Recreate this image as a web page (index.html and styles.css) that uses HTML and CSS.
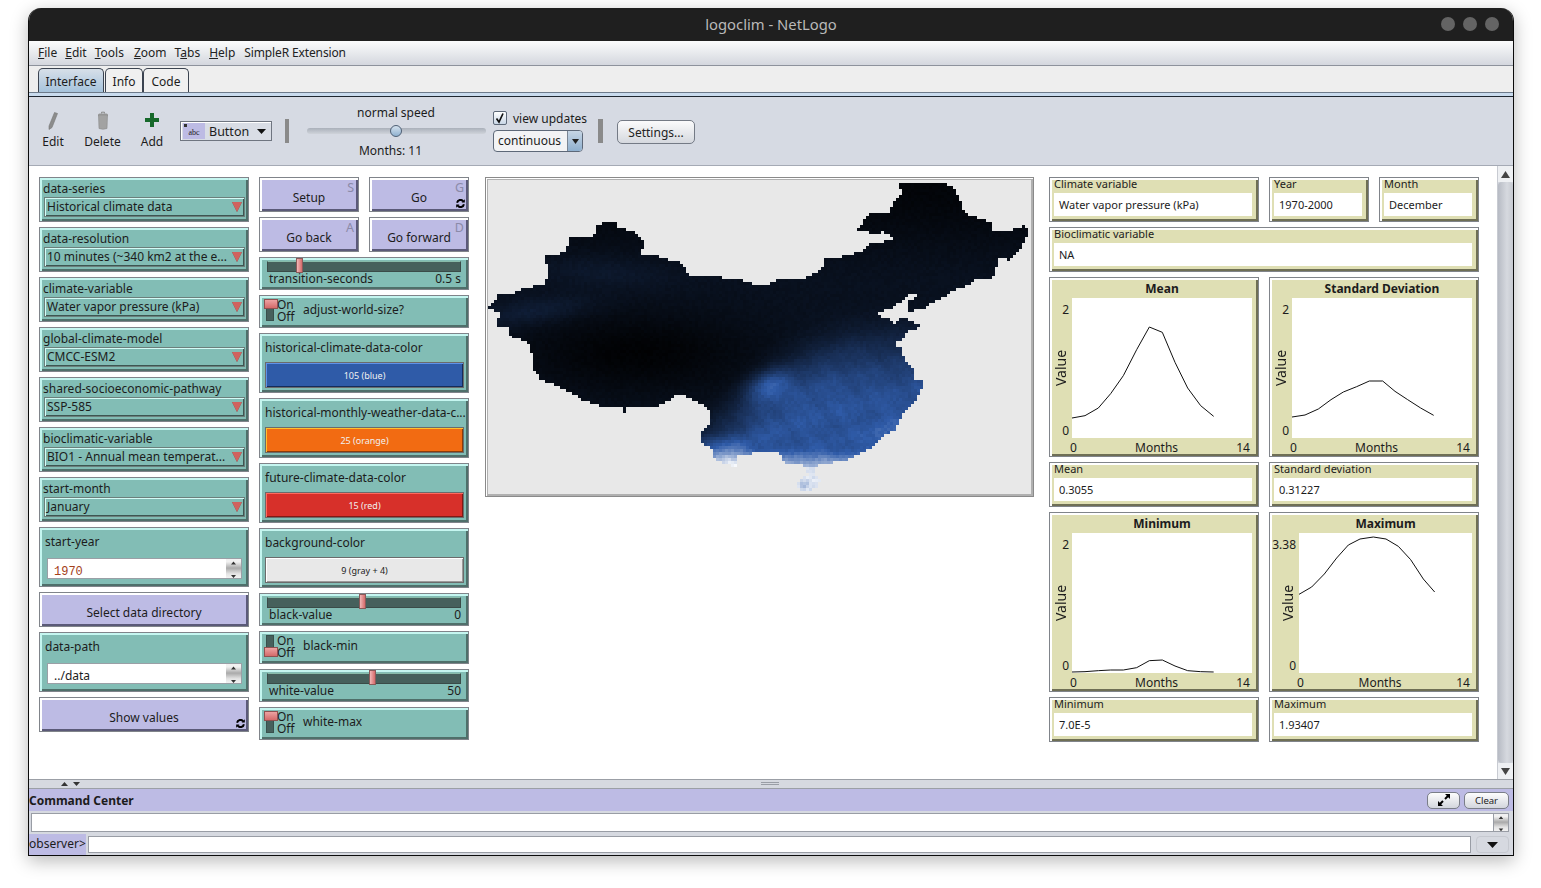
FILE: index.html
```html
<!DOCTYPE html>
<html lang="en">
<head>
<meta charset="utf-8">
<title>logoclim - NetLogo</title>
<link rel="stylesheet" href="styles.css">
</head>
<body>
<svg class="defs" width="0" height="0" aria-hidden="true">
  <defs>
    <symbol id="forever" viewBox="0 0 10 10">
      <path d="M1.2 4.2A3.8 3.8 0 0 1 8 2.6M8.8 5.8A3.8 3.8 0 0 1 2 7.4" fill="none" stroke="#000" stroke-width="2.2"/>
      <path d="M6.2 3.8H9.8V.2ZM3.8 6.2H.2V9.8Z" fill="#000"/>
    </symbol>
    <symbol id="spin" viewBox="0 0 15 21">
      <path d="M5 5.5 7.5 2.5 10 5.5ZM5 16 7.5 19 10 16Z" fill="#333"/>
    </symbol>
  </defs>
</svg>
<div class="window">
  <header class="titlebar">
    <span class="title">logoclim - NetLogo</span>
    <span class="dots"><i></i><i></i><i></i></span>
  </header>
  <nav class="menubar">
    <span><u>F</u>ile</span><span><u>E</u>dit</span><span><u>T</u>ools</span><span class="m-zoom"><u>Z</u>oom</span><span>T<u>a</u>bs</span><span class="m-help"><u>H</u>elp</span><span class="m-ext">SimpleR Extension</span>
  </nav>
  <div class="tabs">
    <span class="tab active">Interface</span><span class="tab tab-info">Info</span><span class="tab tab-code">Code</span>
  </div>
  <div class="tabstrip"></div>
  <div class="toolbar">
    <div class="tool tool-edit">
      <svg width="12" height="20" viewBox="0 0 12 20"><path d="M7.5 1.5 10.5 2.5 5 16.5 2 18.5 2 15Z" fill="#8c8c8c" stroke="#777" stroke-width=".6"/></svg>
      <span>Edit</span>
    </div>
    <div class="tool tool-delete">
      <svg width="12" height="20" viewBox="0 0 12 20"><path d="M4.5 2.5V1.2H7.5V2.5" fill="none" stroke="#888"/><rect x="1" y="2.5" width="10" height="3" rx="1.5" fill="#9a9a9a"/><path d="M1.5 4H10.5L10 17.5Q6 19 2 17.5Z" fill="#a2a2a2" stroke="#8a8a8a" stroke-width=".6"/></svg>
      <span>Delete</span>
    </div>
    <div class="tool tool-add">
      <svg width="14" height="20" viewBox="0 0 14 20"><path d="M5 2H9V7H14V11H9V16H5V11H0V7H5Z" fill="#17692b"/></svg>
      <span>Add</span>
    </div>
    <div class="widget-picker">
      <span class="picker-icon"><i>abc</i></span>
      <span class="picker-name">Button</span>
      <svg width="9" height="5" viewBox="0 0 9 5"><path d="M0 0H9L4.5 5Z" fill="#111"/></svg>
    </div>
    <div class="sep"></div>
    <div class="speed">
      <span class="speed-top">normal speed</span>
      <div class="speed-track"><span class="speed-thumb"></span></div>
      <span class="speed-bottom">Months: 11</span>
    </div>
    <div class="updates">
      <label class="check-row"><span class="check"><svg width="12" height="12" viewBox="0 0 12 12"><path d="M2.5 6.5 5 10 9 1.5" fill="none" stroke="#111" stroke-width="1.7"/></svg></span>view updates</label>
      <div class="combo"><span class="combo-text">continuous</span><span class="combo-btn"><svg width="7" height="5" viewBox="0 0 7 5"><path d="M0 0H7L3.5 5Z" fill="#222"/></svg></span></div>
    </div>
    <div class="sep sep-2"></div>
    <button class="settings">Settings...</button>
  </div>

  <main class="workspace">
    <div class="canvas">
      <section class="col">
        <div class="w teal chooser"><span class="w-label">data-series</span><div class="chooser-box"><span>Historical climate data</span><b class="tri"></b></div></div>
        <div class="w teal chooser"><span class="w-label">data-resolution</span><div class="chooser-box"><span>10 minutes (~340 km2 at the e...</span><b class="tri"></b></div></div>
        <div class="w teal chooser"><span class="w-label">climate-variable</span><div class="chooser-box"><span>Water vapor pressure (kPa)</span><b class="tri"></b></div></div>
        <div class="w teal chooser"><span class="w-label">global-climate-model</span><div class="chooser-box"><span>CMCC-ESM2</span><b class="tri"></b></div></div>
        <div class="w teal chooser"><span class="w-label">shared-socioeconomic-pathway</span><div class="chooser-box"><span>SSP-585</span><b class="tri"></b></div></div>
        <div class="w teal chooser"><span class="w-label">bioclimatic-variable</span><div class="chooser-box"><span>BIO1 - Annual mean temperat...</span><b class="tri"></b></div></div>
        <div class="w teal chooser"><span class="w-label">start-month</span><div class="chooser-box"><span>January</span><b class="tri"></b></div></div>
        <div class="w teal input"><span class="input-label">start-year</span><div class="input-field"><span class="num">1970</span><span class="spinner"><svg width="15" height="21"><use href="#spin"/></svg></span></div></div>
        <div class="w lav button">Select data directory</div>
        <div class="w teal input"><span class="input-label">data-path</span><div class="input-field"><span class="str">../data</span><span class="spinner"><svg width="15" height="21"><use href="#spin"/></svg></span></div></div>
        <div class="w lav button">Show values<svg class="forever" width="9" height="9"><use href="#forever"/></svg></div>
      </section>

      <section class="col">
        <div class="btn-row">
          <div class="w lav button half">Setup<span class="key">S</span></div>
          <div class="w lav button half">Go<span class="key">G</span><svg class="forever" width="9" height="9"><use href="#forever"/></svg></div>
        </div>
        <div class="btn-row">
          <div class="w lav button half">Go back<span class="key">A</span></div>
          <div class="w lav button half">Go forward<span class="key">D</span></div>
        </div>
        <div class="w teal slider"><div class="track"><span class="thumb" style="left:16.5%"></span></div><div class="slider-text"><span>transition-seconds</span><span>0.5 s</span></div></div>
        <div class="w teal switch"><span class="toggle on"></span><span class="onoff"><span>On</span><span>Off</span></span><span class="switch-name">adjust-world-size?</span></div>
        <div class="w teal colorw"><span class="input-label">historical-climate-data-color</span><div class="swatch blue">105 (blue)</div></div>
        <div class="w teal colorw"><span class="input-label">historical-monthly-weather-data-c...</span><div class="swatch orange">25 (orange)</div></div>
        <div class="w teal colorw"><span class="input-label">future-climate-data-color</span><div class="swatch red">15 (red)</div></div>
        <div class="w teal colorw"><span class="input-label">background-color</span><div class="swatch grey">9 (gray + 4)</div></div>
        <div class="w teal slider"><div class="track"><span class="thumb" style="left:49.5%"></span></div><div class="slider-text"><span>black-value</span><span>0</span></div></div>
        <div class="w teal switch"><span class="toggle off"></span><span class="onoff"><span>On</span><span>Off</span></span><span class="switch-name">black-min</span></div>
        <div class="w teal slider"><div class="track"><span class="thumb" style="left:54.6%"></span></div><div class="slider-text"><span>white-value</span><span>50</span></div></div>
        <div class="w teal switch"><span class="toggle on"></span><span class="onoff"><span>On</span><span>Off</span></span><span class="switch-name">white-max</span></div>
      </section>

      <section class="view">
        <canvas id="map" class="map" width="181" height="105"></canvas>
      </section>

      <section class="col col-right">
        <div class="right-row">
          <div class="w tan monitor"><span class="m-label">Climate variable</span><div class="m-value">Water vapor pressure (kPa)</div></div>
          <div class="w tan monitor small"><span class="m-label">Year</span><div class="m-value">1970-2000</div></div>
          <div class="w tan monitor small"><span class="m-label">Month</span><div class="m-value">December</div></div>
        </div>
        <div class="w tan monitor wide"><span class="m-label">Bioclimatic variable</span><div class="m-value">NA</div></div>
        <div class="right-row">
          <div class="w tan plot">
            <div class="plot-title">Mean</div>
            <div class="plot-mid">
              <span class="y-name">Value</span>
              <span class="y-ticks"><span>2</span><span>0</span></span>
              <svg class="plot-area" viewBox="0 0 540 420" preserveAspectRatio="none"><polyline points="0,360 39,353 79,330 116,287 154,233 194,155 232,87 271,103 309,193 347,270 386,323 425,355"/></svg>
            </div>
            <div class="plot-foot"><span>0</span><span class="foot-name">Months</span><span>14</span></div>
          </div>
          <div class="w tan plot">
            <div class="plot-title">Standard Deviation</div>
            <div class="plot-mid">
              <span class="y-name">Value</span>
              <span class="y-ticks"><span>2</span><span>0</span></span>
              <svg class="plot-area" viewBox="0 0 540 420" preserveAspectRatio="none"><polyline points="0,357 39,351 79,333 117,305 154,282 194,266 232,249 272,249 309,280 347,305 386,330 425,352"/></svg>
            </div>
            <div class="plot-foot"><span>0</span><span class="foot-name">Months</span><span>14</span></div>
          </div>
        </div>
        <div class="right-row">
          <div class="w tan monitor half-r"><span class="m-label">Mean</span><div class="m-value">0.3055</div></div>
          <div class="w tan monitor half-r"><span class="m-label">Standard deviation</span><div class="m-value">0.31227</div></div>
        </div>
        <div class="right-row">
          <div class="w tan plot">
            <div class="plot-title">Minimum</div>
            <div class="plot-mid">
              <span class="y-name">Value</span>
              <span class="y-ticks"><span>2</span><span>0</span></span>
              <svg class="plot-area" viewBox="0 0 540 420" preserveAspectRatio="none"><polyline points="0,417 39,416 79,413 116,411 154,411 194,404 232,383 271,381 309,399 347,413 386,416 425,417"/></svg>
            </div>
            <div class="plot-foot"><span>0</span><span class="foot-name">Months</span><span>14</span></div>
          </div>
          <div class="w tan plot plot-wide-y">
            <div class="plot-title">Maximum</div>
            <div class="plot-mid">
              <span class="y-name">Value</span>
              <span class="y-ticks"><span>3.38</span><span>0</span></span>
              <svg class="plot-area" viewBox="0 0 519 420" preserveAspectRatio="none"><polyline points="0,184 38,162 76,123 113,75 148,36 183,18 223,12 261,18 298,40 335,80 373,138 407,177"/></svg>
            </div>
            <div class="plot-foot"><span>0</span><span class="foot-name">Months</span><span>14</span></div>
          </div>
        </div>
        <div class="right-row">
          <div class="w tan monitor half-r"><span class="m-label">Minimum</span><div class="m-value">7.0E-5</div></div>
          <div class="w tan monitor half-r"><span class="m-label">Maximum</span><div class="m-value">1.93407</div></div>
        </div>
      </section>
    </div>
    <aside class="scrollbar">
      <span class="sb-btn"><svg width="9" height="7" viewBox="0 0 9 7"><path d="M0 7H9L4.5 0Z" fill="#444"/></svg></span>
      <span class="sb-thumb"></span>
      <span class="sb-btn"><svg width="9" height="7" viewBox="0 0 9 7"><path d="M0 0H9L4.5 7Z" fill="#444"/></svg></span>
    </aside>
  </main>

  <div class="splitter">
    <span class="split-arrows">
      <svg width="7" height="4" viewBox="0 0 7 4"><path d="M0 4H7L3.5 0Z" fill="#333"/></svg>
      <svg width="7" height="4" viewBox="0 0 7 4"><path d="M0 0H7L3.5 4Z" fill="#333"/></svg>
    </span>
    <span class="grip"></span>
  </div>
  <section class="command">
    <div class="cmd-title">
      <span>Command Center</span>
      <span class="cmd-buttons">
        <button class="cmd-btn expand"><svg width="12" height="12" viewBox="0 0 12 12"><path d="M7 0H12V5L10.2 3.2 7.7 5.7 6.3 4.3 8.8 1.8ZM5 12H0V7L1.8 8.8 4.3 6.3 5.7 7.7 3.2 10.2Z" fill="#000"/></svg></button>
        <button class="cmd-btn clear">Clear</button>
      </span>
    </div>
    <div class="cmd-output"><div class="cmd-area"></div><span class="spinner"><svg width="15" height="19" viewBox="0 0 15 21"><use href="#spin"/></svg></span></div>
    <div class="cmd-input">
      <span class="prompt">observer&gt;</span>
      <div class="cmd-field"></div>
      <span class="cmd-drop"><svg width="11" height="6" viewBox="0 0 11 6"><path d="M0 0H11L5.5 6Z" fill="#111"/></svg></span>
    </div>
  </section>
</div>
<script src="map.js"></script>
</body>
</html>
```

FILE: map.js
```js
(function () {
  var outline = [1175,35,1210,30,1300,35,1330,50,1345,85,1360,125,1435,150,1440,178,1490,175,1530,160,1540,180,1525,215,1500,250,1480,265,1465,255,1450,265,1445,310,1420,325,1400,315,1370,340,1345,350,1340,345,1300,375,1260,395,1245,410,1200,418,1195,395,1220,370,1200,365,1160,405,1115,420,1115,430,1150,445,1155,460,1190,430,1200,450,1240,455,1225,470,1195,480,1190,495,1160,520,1180,535,1190,570,1215,600,1218,630,1240,628,1235,660,1220,690,1190,720,1175,745,1165,775,1130,795,1100,825,1060,850,1020,870,940,880,935,910,950,925,940,950,910,965,885,950,890,925,915,910,910,885,850,875,835,845,800,840,740,850,715,855,718,888,675,880,650,860,650,835,615,815,612,790,635,760,640,720,620,705,575,680,560,670,540,675,495,705,465,712,410,705,395,725,390,708,340,710,285,690,260,675,215,650,160,625,135,590,140,570,125,515,75,495,70,465,35,462,45,425,12,405,40,370,85,370,95,355,170,335,185,295,170,255,230,240,245,195,310,195,315,160,370,145,380,165,435,185,450,210,445,245,500,255,560,275,580,310,720,320,740,332,790,340,830,325,920,315,960,285,955,255,1000,258,1070,235,1085,215,1160,205,1130,180,1100,185,1055,175,1085,125,1145,120,1170,70,1185,65,1170,40];

  function inside(x, y) {
    var hit = false;
    for (var i = 0, j = outline.length - 2; i < outline.length; j = i, i += 2) {
      var xi = outline[i], yi = outline[i + 1], xj = outline[j], yj = outline[j + 1];
      if ((yi > y) !== (yj > y) && x < (xj - xi) * (y - yi) / (yj - yi) + xi) hit = !hit;
    }
    return hit;
  }
  function smooth(a, b, v) {
    var t = Math.min(1, Math.max(0, (v - a) / (b - a)));
    return t * t * (3 - 2 * t);
  }
  function blob(x, y, cx, cy, sx, sy, deg) {
    var r = deg * Math.PI / 180, dx = x - cx, dy = y - cy;
    var u = (dx * Math.cos(r) + dy * Math.sin(r)) / sx;
    var w = (-dx * Math.sin(r) + dy * Math.cos(r)) / sy;
    return Math.exp(-(u * u + w * w));
  }
  function random(x, y) {
    var s = Math.sin(x * 12.9898 + y * 78.233) * 43758.5453;
    return s - Math.floor(s);
  }
  /* value of the raster at a point: 0 is black, .5 the blue, 1 white */
  function value(x, y) {
    var v = 0.025 + 0.065 * smooth(30, 350, y);
    v += 0.09 * blob(x, y, 150, 420, 150, 38, -8);
    v += 0.045 * blob(x, y, 340, 300, 190, 45, 4);
    v *= 1 - 0.86 * blob(x, y, 430, 545, 340, 125, 0);
    var east = smooth(700, 1000, x + (y - 600) * 0.9);
    var blotch = Math.sin(x * 0.037 + y * 0.023 + 1) * Math.sin(x * 0.013 - y * 0.047) + 0.5 * Math.sin(x * 0.09 - y * 0.07);
    v += east * smooth(380, 720, y) * (0.36 + 0.025 * blotch);
    v += 0.29 * blob(x, y, 805, 645, 62, 40, -25);
    v += 0.34 * smooth(825, 895, y);
    v += 0.24 * smooth(770, 850, y) * (1 - smooth(680, 800, x));
    v += 0.08 * blob(x, y, 1130, 790, 60, 35, -30);
    if (y > 892) v = 0.92 - 0.14 * blob(x, y, 905, 942, 14, 12, 0);
    v += (random(x, y) - 0.5) * (0.012 + 0.07 * v);
    return Math.max(0, Math.min(1, v));
  }
  function ramp(v) {
    var blue = [47, 91, 168];
    return blue.map(function (c) {
      return v < 0.5 ? c * v / 0.5 : c + (255 - c) * (v - 0.5) / 0.5;
    });
  }

  var canvas = document.getElementById("map");
  var ctx = canvas.getContext("2d");
  var img = ctx.createImageData(canvas.width, canvas.height);
  for (var row = 0; row < canvas.height; row++) {
    for (var col = 0; col < canvas.width; col++) {
      var x = 11 + (col + 0.5) * 3 * 2.825, y = 24 + (row + 0.5) * 3 * 3;
      var c = inside(x, y) ? ramp(value(x, y)) : [232, 232, 232];
      var p = (row * canvas.width + col) * 4;
      img.data[p] = c[0]; img.data[p + 1] = c[1]; img.data[p + 2] = c[2]; img.data[p + 3] = 255;
    }
  }
  ctx.putImageData(img, 0, 0);
})();
```

FILE: styles.css
```css
* { box-sizing: border-box; }
html, body { height: 100%; overflow: hidden; }
body {
  margin: 0;
  padding: 8px 0 0 28px;
  background: #fff;
  font-family: "Noto Sans", sans-serif;
  font-size: 12px;
  color: #1c1c1c;
}
.defs { position: absolute; }
i { font-style: normal; }

.window {
  width: 1486px;
  height: 848px;
  display: flex;
  flex-direction: column;
  border: 1px solid #0b0b0b;
  border-top: 0;
  border-radius: 13px 13px 0 0;
  background: #fff;
  box-shadow: 0 5px 18px rgba(0, 0, 0, .28);
  overflow: hidden;
}

/* title bar */
.titlebar {
  height: 33px;
  flex: none;
  display: flex;
  align-items: center;
  justify-content: center;
  position: relative;
  padding-bottom: 2px;
  background: #1f1f1f;
}
.title { font-size: 14.8px; color: #b9b9b9; }
.dots {
  position: absolute;
  right: 14px;
  top: 9px;
  display: flex;
  gap: 8px;
}
.dots i { width: 14px; height: 14px; border-radius: 50%; background: #646464; }

/* menu */
.menubar {
  height: 25px;
  flex: none;
  display: flex;
  align-items: center;
  gap: 8px;
  padding: 0 0 1px 9px;
  font-size: 12px;
  color: #222;
  background: linear-gradient(#fbfcfc, #d4d7de);
  border-bottom: 1px solid #8d929c;
}
.m-zoom { margin-left: 2px; }
.m-help { margin-left: 1px; }
.m-ext { margin-left: 1px; letter-spacing: -.13px; }

/* tabs */
.tabs {
  height: 27px;
  flex: none;
  display: flex;
  align-items: flex-end;
  padding-left: 9px;
  background: #eeeeee;
  border-bottom: 1px solid #6d7a8a;
}
.tab {
  height: 24px;
  width: 66px;
  padding-top: 2px;
  display: flex;
  align-items: center;
  justify-content: center;
  font-size: 12px;
  border: 1px solid #3b4350;
  border-bottom: 0;
  border-radius: 5px 5px 0 0;
  background: #f0f0f0;
}
.tab.active { margin-right: 1px; background: linear-gradient(#d7dfe8, #a6c3dc); }
.tab-info { width: 38px; }
.tab-code { width: 46px; margin-left: 0; }
.tabstrip {
  height: 4px;
  flex: none;
  background: #c9dbee;
  border-bottom: 1px solid #1e2630;
}

/* toolbar */
.toolbar {
  height: 69px;
  flex: none;
  position: relative;
  display: flex;
  align-items: flex-start;
  background: #d6dae3;
  border-bottom: 1px solid #a5aab5;
}
.tool {
  display: flex;
  flex-direction: column;
  align-items: center;
  margin-top: 14px;
  line-height: 16px;
  gap: 3px;
}
.tool-edit { width: 22px; margin-left: 13px; }
.tool-delete { width: 37px; margin-left: 20px; }
.tool-add { width: 22px; margin-left: 20px; }
.widget-picker {
  width: 92px;
  height: 20px;
  margin: 24px 0 0 17px;
  display: flex;
  align-items: center;
  border: 1px solid #6f7580;
  box-shadow: inset 1px 1px 0 #fff;
  background: #d9dde5;
  font-size: 12.5px;
}
.picker-icon {
  position: relative;
  width: 22px;
  height: 16px;
  margin-left: 2px;
  background: #bdbbe4;
  font-size: 8px;
  display: flex;
  align-items: flex-end;
  justify-content: center;
  line-height: 12px;
  font-family: "Liberation Serif", serif;
}
.picker-icon::before {
  content: "";
  position: absolute;
  left: 1px;
  top: 1px;
  width: 3px;
  height: 3px;
  background: #333;
}
.picker-name { margin-left: 4px; flex: 1; }
.widget-picker svg { margin-right: 5px; }
.sep {
  width: 4px;
  height: 24px;
  margin: 22px 0 0 13px;
  background: #8a8a8a;
}
.speed {
  width: 180px;
  margin-left: 17px;
  display: flex;
  flex-direction: column;
  align-items: center;
  padding-top: 8px;
}
.speed-top { line-height: 16px; margin-bottom: 7px; }
.speed-track {
  width: 179px;
  height: 6px;
  border-radius: 3px;
  background: linear-gradient(#aab0ba, #cfd3da);
  position: relative;
  margin-bottom: 9px;
}
.speed-thumb {
  position: absolute;
  left: 83px;
  top: -3px;
  width: 12px;
  height: 12px;
  border-radius: 50%;
  border: 1px solid #4e5f75;
  background: linear-gradient(#d5e2ee, #8fb1d0);
}
.speed-bottom { line-height: 16px; margin-right: 11px; }
.updates { margin-left: 7px; width: 94px; padding-top: 13px; }
.check-row { display: flex; align-items: center; gap: 6px; height: 16px; white-space: nowrap; }
.check {
  width: 14px;
  height: 14px;
  border: 1px solid #5d6878;
  border-radius: 2px;
  background: linear-gradient(#fff, #c9d6e6);
  display: flex;
  align-items: center;
  justify-content: center;
}
.combo {
  width: 90px;
  height: 22px;
  margin-top: 4px;
  display: flex;
  border: 1px solid #5d6878;
  border-radius: 4px;
  background: #f2f3f5;
  overflow: hidden;
}
.combo-text { flex: 1; padding-left: 4px; line-height: 19px; }
.combo-btn {
  width: 15px;
  display: flex;
  align-items: center;
  justify-content: center;
  border-left: 1px solid #7a8594;
  background: linear-gradient(#c6d5e4, #8fb0cf);
}
.sep-2 { width: 5px; margin-left: 11px; }
.settings {
  width: 78px;
  height: 24px;
  margin: 23px 0 0 14px;
  padding: 0;
  font: 12px "Noto Sans", sans-serif;
  color: #222;
  border: 1px solid #747a85;
  border-radius: 5px;
  background: linear-gradient(#fbfbfc, #d5d8de);
}

/* workspace */
.workspace {
  flex: 1;
  min-height: 0;
  display: flex;
  background: #fff;
}
.canvas {
  flex: 1;
  display: flex;
  align-items: flex-start;
  padding: 11px 0 0 10px;
}
.col {
  width: 210px;
  display: flex;
  flex-direction: column;
  gap: 5px;
  margin-right: 10px;
}
.w {
  position: relative;
  border: 1px solid #80848a;
  flex: none;
}
.teal { background: #82bdb5; box-shadow: inset 2px 2px 0 #c5f6f0, inset -2px -2px 0 #4f6f6a; }
.lav { background: #bdbbe4; box-shadow: inset 2px 2px 0 #fff, inset -2px -2px 0 #5b5a78; }
.tan { background: #dfdfb4; box-shadow: inset 2px 2px 0 #fff, inset -2px -2px 0 #6f6f55; }

/* chooser */
.chooser { height: 45px; padding: 3px 3px 0 3px; }
.w-label { display: block; line-height: 15px; margin-bottom: 1px; white-space: nowrap; }
.chooser-box {
  height: 20px;
  width: 201px;
  margin: 0 0 0 1px;
  padding: 0 0 1px 2px;
  display: flex;
  align-items: center;
  justify-content: space-between;
  border: 1px solid #6b7f7b;
  box-shadow: inset 1px 1px 0 #d4fbf6, inset -1px -1px 0 #3d5652;
  white-space: nowrap;
}
.tri {
  width: 0;
  height: 0;
  margin: 1px 2px 0 0;
  border-left: 5px solid transparent;
  border-right: 5px solid transparent;
  border-top: 10px solid #d0625e;
  filter: drop-shadow(0 0 .5px #555);
}

/* input */
.input { height: 60px; padding: 5px 0 0 5px; }
.input-label { display: block; line-height: 17px; white-space: nowrap; }
.input-field {
  width: 195px;
  height: 21px;
  margin: 8px 0 0 2px;
  padding-left: 6px;
  display: flex;
  align-items: stretch;
  justify-content: space-between;
  background: #fff;
  border: 1px solid #9a9fa6;
}
.num, .str { line-height: 23px; }
.num { padding-top: 2px; font-family: "Liberation Mono", monospace; color: #a3401a; font-size: 12px; }
.spinner {
  width: 15px;
  height: 100%;
  flex: none;
  display: flex;
  background: linear-gradient(#f1f1f1 15%, #aaa 48%, #e4e4e4 78%, #f2f2f2);
}

/* buttons */
.button {
  height: 35px;
  padding-top: 12px;
  text-align: center;
  line-height: 16px;
}
.btn-row { display: flex; gap: 10px; }
.half { width: 100px; }
.key {
  position: absolute;
  top: 2px;
  right: 4px;
  font-size: 12.5px;
  line-height: 15px;
  color: #8b8aa8;
}
.forever { position: absolute; right: 3px; bottom: 3px; }

/* slider */
.slider { height: 33px; padding: 3px 7px 0 7px; }
.track {
  height: 11px;
  position: relative;
  background: #46605c;
  border: 1px solid #3a4b48;
  border-top-color: #8ba;
}
.thumb {
  position: absolute;
  top: -4px;
  width: 7px;
  height: 15px;
  margin-left: -4px;
  background: linear-gradient(90deg, #f0b8b8, #d66a6a);
  border: 1px solid #8a5a5a;
}
.slider-text {
  display: flex;
  justify-content: space-between;
  margin-top: -1px;
  padding-left: 2px;
  line-height: 16px;
}

/* switch */
.switch { height: 33px; display: flex; padding: 3px 0 0 4px; }
.toggle {
  position: relative;
  width: 8px;
  height: 22px;
  margin: 0 3px 0 2px;
  background: #46605c;
  border: 1px solid #38504c;
}
.toggle::after {
  content: "";
  position: absolute;
  left: -3px;
  width: 12px;
  height: 8px;
  background: linear-gradient(#eda3a3, #d46a6a);
  border: 1px solid #8f5050;
}
.toggle.on::after { top: -1px; }
.toggle.off::after { bottom: -1px; }
.onoff { display: flex; flex-direction: column; line-height: 12px; width: 26px; }
.switch-name { line-height: 22px; }

/* colour */
.colorw { height: 60px; padding: 5px 4px 0 5px; }
.swatch {
  width: 199px;
  height: 26px;
  margin: 6px 0 0 0;
  display: flex;
  align-items: center;
  justify-content: center;
  font-size: 9px;
  color: #f0f0f0;
  border: 1px solid #6b6b6b;
}
.blue { background: #2f5ba8; box-shadow: inset 1px 1px 0 #5f92e8, inset -1px -1px 0 #142c5a; }
.orange { background: #f26b12; box-shadow: inset 1px 1px 0 #ffc030, inset -1px -1px 0 #8a3c08; }
.red { background: #d7302a; box-shadow: inset 1px 1px 0 #ff6a5e, inset -1px -1px 0 #801a14; }
.grey { background: #e8e8e8; color: #222; box-shadow: inset 1px 1px 0 #fff, inset -1px -1px 0 #9a9a9a; }

/* view */
.view {
  width: 549px;
  height: 320px;
  flex: none;
  margin: 0 15px 0 6px;
  padding: 2px;
  border: 1px solid #8a8a8a;
  box-shadow: inset 1px 1px 0 #fff;
  background: #b0b0b0;
}
.map { display: block; width: 100%; height: 100%; image-rendering: pixelated; }

/* right column */
.col-right { width: 430px; margin: 0; }
.right-row { display: flex; gap: 10px; }
.monitor { width: 210px; height: 45px; }
.monitor.small { width: 100px; }
.monitor.wide { width: 430px; }
.m-label { display: block; font-size: 11px; line-height: 12px; padding-left: 4px; }
.m-value {
  height: 23px;
  margin: 3px 6px 0 4px;
  padding-left: 5px;
  font-size: 11px;
  line-height: 23px;
  background: #fff;
}
.plot { width: 210px; height: 180px; padding: 2px 6px 0 2px; }
.plot-title { height: 18px; text-align: center; font-weight: 700; line-height: 17px; padding-left: 20px; }
.plot-mid { display: flex; height: 140px; }
.y-name {
  width: 16px;
  margin-left: 1px;
  writing-mode: vertical-rl;
  transform: rotate(180deg);
  line-height: 16px;
  font-size: 14px;
  display: flex;
  justify-content: center;
  align-items: center;
}
.y-ticks {
  width: 3px;
  margin-bottom: -1px;
  display: flex;
  flex-direction: column;
  justify-content: space-between;
  align-items: flex-end;
  line-height: 16px;
  padding: 4px 3px 0 0;
}
.y-ticks span { flex: none; white-space: nowrap; }
.plot-area { width: 180px; height: 140px; background: #fff; display: block; }
.plot-area polyline { fill: none; stroke: #111; stroke-width: 3; }
.plot-foot {
  display: flex;
  justify-content: space-between;
  line-height: 17px;
  padding: 1px 2px 0 18px;
}
.plot-wide-y .y-name { margin-left: 8px; }
.plot-wide-y .plot-area { width: 173px; }
.plot-wide-y .plot-foot { padding-left: 25px; }
.plot-wide-y .plot-title { padding-left: 27px; }

/* scrollbar */
.scrollbar {
  width: 16px;
  flex: none;
  display: flex;
  flex-direction: column;
  background: #d4d7de;
  border-left: 1px solid #c8cbd2;
}
.sb-btn {
  height: 16px;
  flex: none;
  display: flex;
  align-items: center;
  justify-content: center;
  background: #eef0f3;
}
.sb-thumb {
  flex: 1;
  background: linear-gradient(90deg, #b7bbc4, #d6d9df 60%, #c6c9d0);
  border-radius: 4px;
}

/* splitter */
.splitter {
  height: 10px;
  flex: none;
  position: relative;
  background: #d6d9e0;
  border-top: 1px solid #9b9fa6;
  border-bottom: 1px solid #9b9fa6;
}
.split-arrows { position: absolute; left: 32px; top: 2px; display: flex; gap: 5px; }
.split-arrows svg { display: block; }
.grip {
  position: absolute;
  left: 732px;
  top: 2px;
  width: 18px;
  height: 3px;
  border-top: 1px solid #9a9ea6;
  border-bottom: 1px solid #9a9ea6;
}

/* command center */
.command { flex: none; height: 66px; display: flex; flex-direction: column; background: #d6d9e0; }
.cmd-title {
  height: 22px;
  flex: none;
  display: flex;
  justify-content: space-between;
  align-items: center;
  padding: 0 4px 0 0;
  font-weight: 700;
  font-size: 12px;
  background: #bdbbe4;
}
.cmd-buttons { display: flex; gap: 4px; }
.cmd-btn {
  height: 17px;
  padding: 0;
  display: flex;
  align-items: center;
  justify-content: center;
  border: 1px solid #7a7e88;
  border-radius: 5px;
  background: linear-gradient(#fdfdfd, #d3d6dd);
  font: 9.5px "Noto Sans", sans-serif;
  color: #222;
}
.expand { width: 33px; }
.clear { width: 45px; }
.cmd-output { display: flex; height: 19px; margin: 2px 4px 0 2px; flex: none; }
.cmd-area { flex: 1; background: #fff; border: 1px solid #999da5; }
.cmd-output .spinner { border: 1px solid #999da5; border-left: 0; }
.cmd-input { display: flex; height: 21px; flex: none; margin-top: 2px; align-items: center; }
.prompt { width: 57px; height: 21px; line-height: 20px; background: #bdbbe4; font-size: 12px; }
.cmd-field { width: 1383px; height: 17px; margin-left: 2px; background: #fff; border: 1px solid #999da5; }
.cmd-drop {
  width: 33px;
  height: 17px;
  margin-left: 5px;
  display: flex;
  align-items: center;
  justify-content: center;
  border: 1px solid #c6c9d0;
  border-radius: 4px;
  background: #d6d9e0;
}
```
